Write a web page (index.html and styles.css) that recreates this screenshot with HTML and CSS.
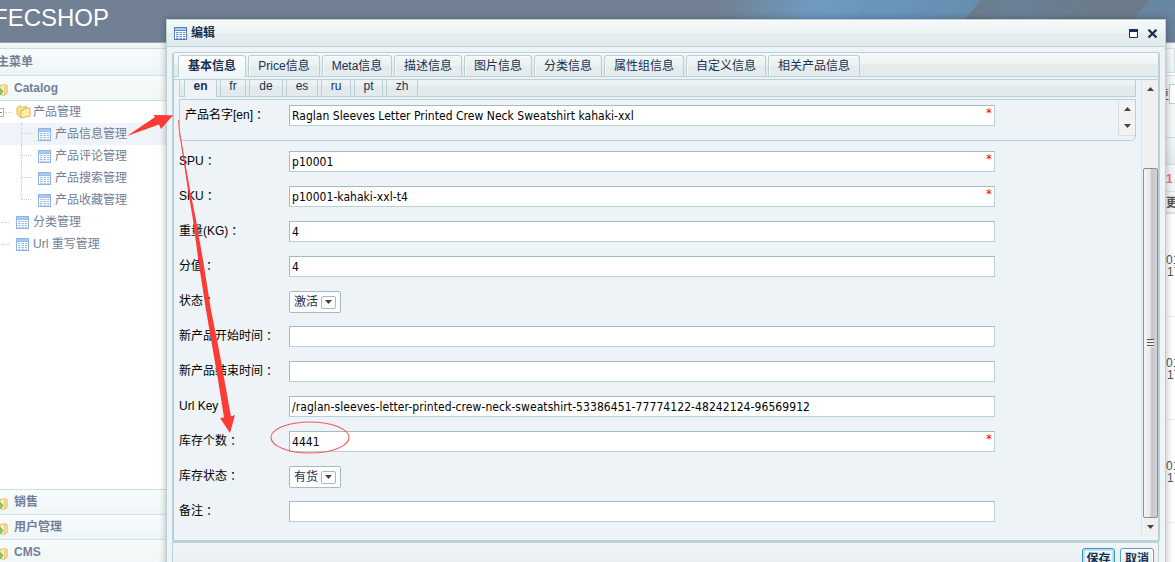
FILE: index.html
```html
<!DOCTYPE html>
<html lang="zh-CN">
<head>
<meta charset="utf-8">
<title>FECSHOP</title>
<link rel="stylesheet" href="styles.css">
</head>
<body>
<svg class="defs" width="0" height="0">
  <symbol id="table" viewBox="0 0 13 13"><rect x=".5" y=".5" width="12" height="12" fill="#fff" stroke="currentColor"/><path d="M1 1h11v2H1z" fill="#a9cbf0"/><path d="M1 3.500h11M2 5.500h2.500M5.500 5.500h2.500M9 5.500h2.200M2 7.500h2.500M5.500 7.500h2.500M9 7.500h2.200M2 9.500h2.500M5.500 9.500h2.500M9 9.500h2.200M2 11.300h2.500M5.500 11.300h2.500M9 11.300h2.200" stroke="currentColor" stroke-width=".9"/></symbol>
  <symbol id="folder" viewBox="0 0 15 14"><path d="M1 2.500 5 .8l1.500 1.500 4-.8V11l-6 1.500L1 9z" fill="#f9e08a" stroke="#dcb95c"/><path d="m4.500 12.800.5-7 3-1 1-1.300 5-.5v8.500l-3.500.3z" fill="#fceea4" stroke="#dcb95c"/></symbol>
  <symbol id="pack" viewBox="0 0 9 14"><path d="M0 2.500 4 1l4 1v9l-4 2-4-1z" fill="#fbf0b8" stroke="#dcb452"/><path d="M5.500 2.500v10" stroke="#dcb452"/><path d="m-1 4.500 4.500 4.200L-1 13z" fill="#8fcf74" stroke="#4fa443"/></symbol>
  <symbol id="up" viewBox="0 0 7 4"><path d="M0 4 3.500 0 7 4z" fill="#444"/></symbol>
  <symbol id="down" viewBox="0 0 7 4"><path d="M0 0h7L3.500 4z" fill="#444"/></symbol>
</svg>
<div class="page">
  <header class="header">
    <svg class="sky" width="1175" height="42" viewBox="0 0 1175 42">
      <defs>
        <linearGradient id="sky1"><stop offset="0" stop-color="#718093"/><stop offset=".61" stop-color="#718093"/><stop offset=".69" stop-color="#6e9abf"/><stop offset=".76" stop-color="#6996bb"/><stop offset=".83" stop-color="#698cab"/><stop offset="1" stop-color="#698cab"/></linearGradient>
        <linearGradient id="sky2"><stop offset="0" stop-color="#6c7a88"/><stop offset=".35" stop-color="#6a8097"/><stop offset=".75" stop-color="#6b7b89"/><stop offset="1" stop-color="#6b7b89"/></linearGradient>
        <linearGradient id="sky3" x2="0" y2="1"><stop offset="0" stop-color="#6888a6"/><stop offset="1" stop-color="#6b7d93"/></linearGradient>
      </defs>
      <rect width="1175" height="42" fill="url(#sky1)"/>
      <path d="M868 0h113l-36 42H835z" fill="#6391b7" opacity=".3"/>
      <path d="M981 0h169l-36 42H945z" fill="url(#sky2)"/>
      <path d="M1150 0h25v42h-61z" fill="url(#sky3)"/>
    </svg>
    <span class="logo">FECSHOP</span>
  </header>
  <div class="columns">
    <nav class="sidebar">
      <div class="menu-title">主菜单</div>
      <div class="group"><svg class="pack"><use href="#pack"/></svg>Catalog</div>
      <ul class="tree">
        <li class="node root"><i class="toggle"></i><i class="dots"></i><svg class="folder"><use href="#folder"/></svg>产品管理</li>
        <li class="node leaf selected"><i class="branch"></i><svg class="ico"><use href="#table"/></svg>产品信息管理</li>
        <li class="node leaf"><i class="branch"></i><svg class="ico"><use href="#table"/></svg>产品评论管理</li>
        <li class="node leaf"><i class="branch"></i><svg class="ico"><use href="#table"/></svg>产品搜索管理</li>
        <li class="node leaf"><i class="branch last"></i><svg class="ico"><use href="#table"/></svg>产品收藏管理</li>
        <li class="node"><i class="stub"></i><svg class="ico"><use href="#table"/></svg>分类管理</li>
        <li class="node"><i class="stub"></i><svg class="ico"><use href="#table"/></svg>Url 重写管理</li>
      </ul>
      <div class="group low"><svg class="pack"><use href="#pack"/></svg>销售</div>
      <div class="group low"><svg class="pack"><use href="#pack"/></svg>用户管理</div>
      <div class="group low"><svg class="pack"><use href="#pack"/></svg>CMS</div>
    </nav>
    <aside class="list">
      <div class="list-tab"></div>
      <div class="list-search"><span>更</span><b></b></div>
      <div class="list-bar"></div>
      <div class="list-count">1</div>
      <div class="list-head">更</div>
      <div class="list-row"><span>01</span><span>17</span></div>
      <div class="list-row"><span>01</span><span>17</span></div>
      <div class="list-row"><span>01</span><span>17</span></div>
      <div class="list-row"></div>
    </aside>
  </div>
</div>

<section class="dialog">
  <div class="dialog-title">
    <svg class="ico"><use href="#table"/></svg><h1>编辑</h1>
    <svg class="win" width="30" height="10" viewBox="0 0 30 10"><path d="M.5 .5h8v8h-8z" fill="#fff" stroke="#183152"/><path d="M0 0h9v3H0z" fill="#183152"/><path d="m19.500 .7 8 7.800M27.500 .7l-8 7.800" stroke="#183152" stroke-width="2.300"/></svg>
  </div>
  <div class="panel">
    <div class="tabs">
      <span class="tab on w68">基本信息</span><span class="tab w72">Price信息</span><span class="tab w70">Meta信息</span><span class="tab w68">描述信息</span><span class="tab w68">图片信息</span><span class="tab w68">分类信息</span><span class="tab w80">属性组信息</span><span class="tab w80">自定义信息</span><span class="tab w92">相关产品信息</span>
    </div>
    <div class="body">
      <div class="content">
        <div class="langs">
          <span class="lang on l33">en</span><span class="lang l26">fr</span><span class="lang l34">de</span><span class="lang l32">es</span><span class="lang l30">ru</span><span class="lang l29">pt</span><span class="lang l32">zh</span>
        </div>
        <div class="name-box">
          <label>产品名字[en]<i>：</i></label>
          <div class="field wide">Raglan Sleeves Letter Printed Crew Neck Sweatshirt kahaki-xxl<em>*</em></div>
          <div class="mini-scroll"><svg class="arrow"><use href="#up"/></svg><svg class="arrow"><use href="#down"/></svg></div>
        </div>
        <div class="form">
          <div class="row"><label>SPU<i>：</i></label><div class="field">p10001<em>*</em></div></div>
          <div class="row"><label>SKU<i>：</i></label><div class="field">p10001-kahaki-xxl-t4<em>*</em></div></div>
          <div class="row"><label>重量(KG)<i>：</i></label><div class="field">4</div></div>
          <div class="row"><label>分值<i>：</i></label><div class="field">4</div></div>
          <div class="row"><label>状态<i>：</i></label><div class="select">激活<i><svg class="arrow"><use href="#down"/></svg></i></div></div>
          <div class="row"><label>新产品开始时间<i>：</i></label><div class="field"></div></div>
          <div class="row"><label>新产品结束时间<i>：</i></label><div class="field"></div></div>
          <div class="row"><label>Url Key<i>：</i></label><div class="field url">/raglan-sleeves-letter-printed-crew-neck-sweatshirt-53386451-77774122-48242124-96569912</div></div>
          <div class="row"><label>库存个数<i>：</i></label><div class="field">4441<em>*</em></div></div>
          <div class="row"><label>库存状态<i>：</i></label><div class="select">有货<i><svg class="arrow"><use href="#down"/></svg></i></div></div>
          <div class="row"><label>备注<i>：</i></label><div class="field"></div></div>
        </div>
      </div>
      <div class="scroll">
        <svg class="arrow"><use href="#up"/></svg>
        <div class="thumb"><i></i></div>
        <svg class="arrow"><use href="#down"/></svg>
      </div>
    </div>
  </div>
  <div class="actions"><span class="btn focus">保存</span><span class="btn">取消</span></div>
</section>

<svg class="marks" width="1175" height="562" viewBox="0 0 1175 562">
  <path d="M127 136 155 117 153.500 115 173 115.300 161 129 159 124.500z" fill="#fc3b37"/>
  <path d="M178.500 126 190 190 196 220 203 260 211 310 219 350 228 400 231 416.500 235 415 230 433 220 418 224 417.500 218 380 206 310 199 265 193 220 188 190z" fill="#fc3b37"/>
  <path d="M178.500 120 179.500 132 189 190" fill="none" stroke="#fc3b37" stroke-width=".8"/>
  <ellipse cx="310" cy="437.500" rx="39" ry="15.500" fill="none" stroke="#f45a58" stroke-width="1.100"/>
</svg>
</body>
</html>
```

FILE: styles.css
```css
* { box-sizing: border-box; }
body {
  margin: 0;
  width: 1175px;
  height: 562px;
  overflow: hidden;
  position: relative;
  font: 12px/16px "Liberation Sans", "Noto Sans CJK SC", sans-serif;
  color: #000;
  background: #fff;
}
svg { display: block; flex: none; }
i, em { font-style: normal; }
.defs { position: absolute; }
.page { height: 562px; display: flex; flex-direction: column; }

.header {
  height: 43px;
  border-bottom: 1px solid #93a5b8;
  position: relative;
  flex: none;
}
.sky { position: absolute; left: 0; top: 0; }
.logo {
  position: relative;
  display: block;
  margin-left: -7px;
  padding-top: 4px;
  font-size: 24px;
  line-height: 28px;
  color: #fff;
}
.columns {
  flex: 1;
  display: flex;
  justify-content: space-between;
  background: #f0f6f6;
  padding-top: 5px;
  min-height: 0;
}
.sidebar {
  width: 175px;
  display: flex;
  flex-direction: column;
  border-top: 1px solid #c9dede;
  color: #728097;
  margin-bottom: -2px;
}
.menu-title {
  height: 27px;
  margin-left: -3px;
  line-height: 26px;
  font-weight: bold;
  border-bottom: 1px solid #cfe2e2;
  background: linear-gradient(#f8fbfb, #eef4f5);
}
.group {
  height: 25px;
  flex: none;
  display: flex;
  align-items: center;
  gap: 6px;
  font-weight: bold;
  border-bottom: 1px solid #cfe2e2;
  background: linear-gradient(#f9fcfc, #f0f6f7);
}
.low { border-bottom: 0; border-top: 1px solid #cfe2e2; }
.pack { width: 8px; height: 14px; margin-top: 3px; }
.tree {
  flex: 1;
  margin: 0;
  padding: 0;
  list-style: none;
  background: #fff;
}
.node { display: flex; height: 22px; align-items: center; padding-left: 1px; }
.selected { background: #f0f3f9; }
.ico { width: 13px; height: 13px; color: #8fb4e2; margin-right: 4px; margin-top: 1px; }
.folder { width: 15px; height: 14px; margin-right: 2px; }
.toggle {
  width: 5px;
  height: 9px;
  margin-left: -2px;
  border: 1px solid #b5b5b5;
  border-left: 0;
  background: linear-gradient(#888, #888) 0 3px / 3px 1px no-repeat;
}
.dots { width: 6px; margin: 0 5px 0 1px; border-top: 1px dotted #d0d0d0; }
.branch {
  width: 11px;
  height: 22px;
  margin: 0 6px 0 20px;
  border-left: 1px dotted #ccc;
  background: repeating-linear-gradient(90deg, #ccc 0 1px, transparent 1px 2px) 0 10px / 11px 1px no-repeat;
}
.last { height: 11px; margin-bottom: 11px; }
.stub { width: 8px; margin-right: 7px; border-top: 1px dotted #ccc; }

.list { width: 25px; overflow: hidden; color: #555; background: #fff; }
.list-tab { height: 25px; border: 1px solid #cfe2e2; background: linear-gradient(#f7fafa, #edf3f4); }
.list-search {
  height: 62px;
  margin-top: 2px;
  padding: 8px 0 0 7px;
  display: flex;
  border-top: 1px solid #cfe2e2;
  background: #f1f6f7;
}
.list-search span { line-height: 22px; }
.list-search b { width: 16px; height: 20px; flex: none; background: #fff; border: 1px solid #b9cfd4; }
.list-bar { height: 28px; border: 1px solid #c9dede; border-width: 1px 0; background: linear-gradient(#f1f6f6, #e3ebed); }
.list-count { height: 26px; padding-left: 16px; line-height: 28px; font-weight: bold; color: #fa6b8b; background: #f1f6f7; }
.list-head { height: 23px; padding-left: 16px; line-height: 22px; font-weight: bold; border-top: 1px solid #d5dfe2; border-bottom: 2px solid #ddd; background: #f5f5f5; }
.list-row { height: 103px; padding: 40px 0 0 16px; line-height: 12px; border-bottom: 1px solid #ededed; }
.list-row span { display: block; }
.list-row span + span { padding-left: 1px; }

.dialog {
  position: absolute;
  left: 166px;
  top: 19px;
  width: 1000px;
  height: 560px;
  padding: 0 5px;
  border: 1px solid #b8d0d6;
  background: #edf3f6;
  box-shadow: 0 0 7px rgba(0, 0, 0, .3);
}
.dialog-title {
  height: 27px;
  margin: 0 -5px 5px;
  padding: 0 7px;
  display: flex;
  align-items: center;
  border-bottom: 1px solid #b8d0d6;
  box-shadow: inset 0 1px #fff;
  background: linear-gradient(#f5f9f9, #edf2f3 50%, #e6edef 50%, #e2eaec);
}
.dialog-title .ico { color: #4a7fc5; }
h1 { margin: 0; font-size: 12px; line-height: 16px; color: #183152; flex: 1; }
.win { margin-right: -1px; margin-top: 2px; }
.panel {
  width: 988px;
  height: 490px;
  border: 2px solid #b8d0d6;
  border-top-width: 1px;
  border-radius: 3px;
  display: flex;
  flex-direction: column;
}
.tabs {
  height: 24px;
  flex: none;
  display: flex;
  gap: 2px;
  padding: 2px 0 0 4px;
  border-bottom: 1px solid #b8d0d6;
  background: linear-gradient(#f5f9f9, #edf2f3 50%, #e6edef 50%, #e2eaec);
}
.tab {
  height: 21px;
  line-height: 20px;
  text-align: center;
  color: #183152;
  border: 1px solid #b8d0d6;
  border-bottom: 0;
  border-radius: 3px 3px 0 0;
  box-shadow: inset 1px 1px #fafcfc;
  background: linear-gradient(#f2f6f7, #ebf1f2 50%, #e4ebed 50%, #e6edef);
}
.tab.on { height: 22px; font-weight: bold; background: linear-gradient(#fff, #edf3f6); }
.w68 { width: 68px; }
.w70 { width: 70px; }
.w72 { width: 72px; }
.w80 { width: 80px; }
.w92 { width: 92px; }
.body {
  flex: 1;
  min-height: 0;
  margin-top: 2px;
  border-top: 1px solid #b8d0d6;
  display: flex;
  justify-content: space-between;
}
.content { width: 963px; padding-left: 5px; }
.langs {
  height: 17px;
  display: flex;
  gap: 3px;
  padding-left: 4px;
  border: 1px solid #b8d0d6;
  border-top: 0;
  background: linear-gradient(#ecf2f3 40%, #e2eaec 40%);
  width: 957px;
}
.lang {
  height: 16px;
  line-height: 13px;
  text-align: center;
  color: #183152;
  border: 1px solid #b8d0d6;
  border-width: 0 1px;
}
.lang.on { height: 17px; font-weight: bold; background: #edf3f6; }
.l26 { width: 26px; }
.l29 { width: 29px; }
.l30 { width: 30px; }
.l32 { width: 32px; }
.l33 { width: 33px; }
.l34 { width: 34px; }
.name-box {
  width: 957px;
  height: 42px;
  margin-top: 2px;
  padding: 5px 0 0 5px;
  display: flex;
  border: 1px solid #b8d0d6;
  border-radius: 0 0 5px 5px;
}
label { height: 21px; line-height: 20px; }
label i { padding-left: 3px; }
.name-box label { width: 104px; line-height: 21px; }
.mini-scroll {
  width: 17px;
  height: 36px;
  margin: -5px 0 0 auto;
  padding: 7px 5px;
  display: flex;
  flex-direction: column;
  justify-content: space-between;
  border-left: 1px solid #ddd;
  border-bottom: 1px solid #ddd;
  background: #f2f2f2;
}
.arrow { width: 7px; height: 4px; }
.form { padding-top: 3px; }
.row {
  height: 35px;
  display: grid;
  grid-template-columns: 110px 706px;
  padding-top: 7px;
}
.field {
  width: 706px;
  height: 21px;
  padding-left: 2px;
  display: flex;
  justify-content: space-between;
  font: 12px/20px "DejaVu Sans Condensed", "Noto Sans", sans-serif;
  letter-spacing: .035px;
  white-space: nowrap;
  background: #fff;
  border: 1px solid #b8d0d6;
  border-top-color: #a2bac0;
  border-left-color: #a2bac0;
}
.url { letter-spacing: .07px; }
.field em { color: #e8000d; padding-right: 2px; font-size: 13px; line-height: 13px; }
.select {
  width: 52px;
  height: 22px;
  padding-left: 4px;
  display: flex;
  align-items: center;
  gap: 3px;
  line-height: 18px;
  color: #183152;
  background: #fff;
  border: 1px solid #a2bac0;
  border-radius: 2px;
}
.select i {
  width: 15px;
  height: 13px;
  display: flex;
  align-items: center;
  justify-content: center;
  border: 1px solid #a2bac0;
  border-radius: 2px;
}
.scroll {
  width: 17px;
  height: 456px;
  display: flex;
  flex-direction: column;
  justify-content: space-between;
  align-items: center;
  padding: 7px 0 7px;
  border-left: 1px solid #e3e3e3;
  background: #f0f0f0;
}
.thumb {
  width: 15px;
  height: 350px;
  margin-top: 69px;
  border: 1px solid #8e8e8e;
  border-radius: 2px;
  display: flex;
  align-items: center;
  justify-content: center;
  background: linear-gradient(90deg, #f6f6f6, #e8e8ea 45%, #c6c6ca 60%, #d4d4d7);
}
.thumb i { width: 7px; height: 8px; background: repeating-linear-gradient(#555 0 1px, #eee 1px 3px); }
.actions {
  height: 40px;
  margin: 0 1px 0 0;
  padding: 5px 4px 0;
  display: flex;
  justify-content: flex-end;
  gap: 5px;
  border: 1px solid #b8d0d6;
  background: linear-gradient(#f1f5f7, #e4e9ef);
}
.btn {
  width: 34px;
  height: 24px;
  line-height: 20px;
  text-align: center;
  font-weight: bold;
  color: #183152;
  border: 1px solid #5f9fb9;
  border-radius: 3px;
  box-shadow: inset 0 0 0 1px #fff;
  background: linear-gradient(#f8fbfc, #dfe8ec);
}
.focus { width: 33px; border-color: #3f8fb4; box-shadow: inset 0 0 0 2px #b5e3f5; }
.marks { position: absolute; left: 0; top: 0; }
```
